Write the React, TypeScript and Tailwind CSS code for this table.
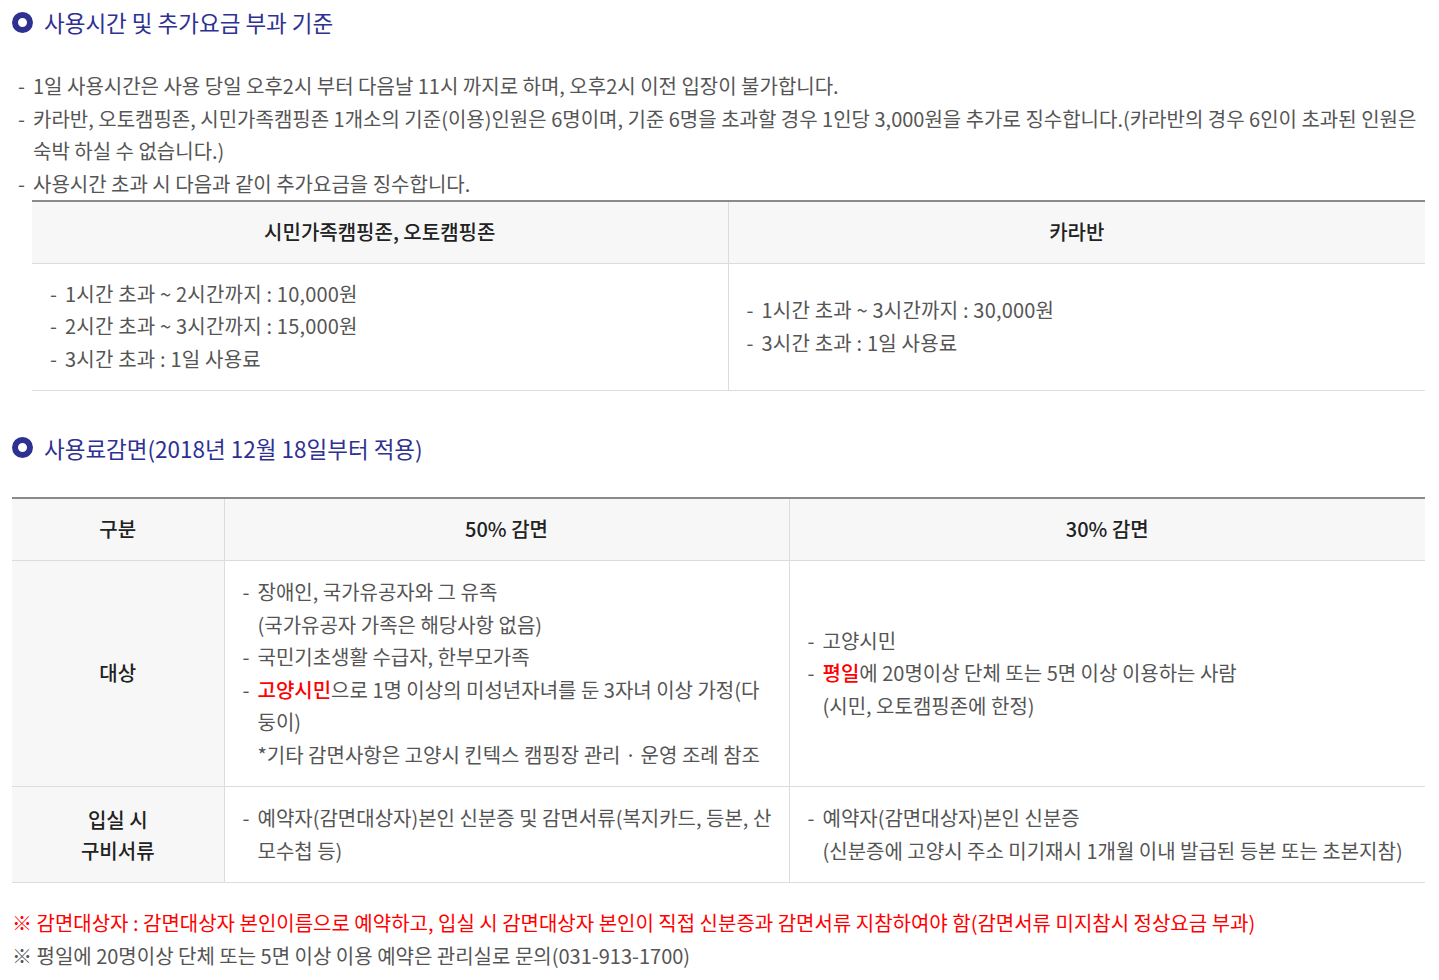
import React from 'react';

const Title: React.FC<{ children: React.ReactNode }> = ({ children }) => (
  <h3 className="flex items-center gap-[11px] text-[22.5px] leading-[30px] text-[#2e3192] font-normal">
    <span className="w-[21px] h-[21px] rounded-full border-[6.5px] border-[#2e3192] shrink-0" />
    <span>{children}</span>
  </h3>
);

const Dash: React.FC<{ children: React.ReactNode; className?: string }> = ({ children, className }) => (
  <li className={`flex ${className ?? ''}`}>
    <span className="w-[15px] shrink-0">-</span>
    <span>{children}</span>
  </li>
);

export default function App() {
  return (
    <div
      className="w-[1439px] h-[980px] bg-white text-[#555] text-[20px] leading-[32.5px] overflow-hidden"
      style={{ fontFamily: '"Noto Sans CJK KR", "Noto Sans", sans-serif' }}
    >
      <div className="pl-[12px] pr-[14px] pt-[7px]">
        <Title>사용시간 및 추가요금 부과 기준</Title>

        <ul className="mt-[33px] pl-[6px]">
          <Dash>1일 사용시간은 사용 당일 오후2시 부터 다음날 11시 까지로 하며, 오후2시 이전 입장이 불가합니다.</Dash>
          <Dash>
            카라반, 오토캠핑존, 시민가족캠핑존 1개소의 기준(이용)인원은 6명이며, 기준 6명을 초과할 경우 1인당 3,000원을 추가로 징수합니다.(카라반의 경우 6인이 초과된 인원은 숙박 하실 수 없습니다.)
          </Dash>
          <Dash>사용시간 초과 시 다음과 같이 추가요금을 징수합니다.</Dash>
        </ul>

        <table className="ml-[20px] w-[1393px] border-collapse border-t-2 border-t-[#8a8a8a] border-b border-b-[#dcdcdc]">
          <thead>
            <tr className="bg-[#f7f7f7] h-[62px] text-[#222]">
              <th className="w-[696px] font-medium border-r border-[#dcdcdc] border-b">시민가족캠핑존, 오토캠핑존</th>
              <th className="font-medium border-b border-[#dcdcdc]">카라반</th>
            </tr>
          </thead>
          <tbody className="tracking-[0.2px]">
            <tr className="h-[127px]">
              <td className="border-r border-[#dcdcdc] px-[18px] align-middle">
                <ul>
                  <Dash>1시간 초과 ~ 2시간까지 : 10,000원</Dash>
                  <Dash>2시간 초과 ~ 3시간까지 : 15,000원</Dash>
                  <Dash>3시간 초과 : 1일 사용료</Dash>
                </ul>
              </td>
              <td className="px-[18px] align-middle">
                <ul>
                  <Dash>1시간 초과 ~ 3시간까지 : 30,000원</Dash>
                  <Dash>3시간 초과 : 1일 사용료</Dash>
                </ul>
              </td>
            </tr>
          </tbody>
        </table>

        <div className="mt-[42px]">
          <Title>사용료감면(2018년 12월 18일부터 적용)</Title>
        </div>

        <table className="w-[1413px] mt-[34px] border-collapse border-t-2 border-t-[#8a8a8a] border-b border-b-[#dcdcdc]">
          <thead>
            <tr className="bg-[#f7f7f7] h-[63px] text-[#222]">
              <th className="w-[212px] font-medium border-r border-b border-[#dcdcdc]">구분</th>
              <th className="w-[565px] font-medium border-r border-b border-[#dcdcdc]">50% 감면</th>
              <th className="font-medium border-b border-[#dcdcdc]">30% 감면</th>
            </tr>
          </thead>
          <tbody>
            <tr className="h-[226px] border-b border-[#dcdcdc]">
              <th className="bg-[#f7f7f7] font-medium text-[#222] border-r border-[#dcdcdc]">대상</th>
              <td className="border-r border-[#dcdcdc] pl-[18px] pr-[14px] align-middle break-all">
                <ul>
                  <Dash>
                    장애인, 국가유공자와 그 유족
                    <br />
                    (국가유공자 가족은 해당사항 없음)
                  </Dash>
                  <Dash>국민기초생활 수급자, 한부모가족</Dash>
                  <Dash>
                    <span className="text-[#ff0000] font-medium">고양시민</span>으로 1명 이상의 미성년자녀를 둔 3자녀 이상 가정(다
                    <br />
                    둥이)
                    <br />
                    *기타 감면사항은 고양시 킨텍스 캠핑장 관리 · 운영 조례 참조
                  </Dash>
                </ul>
              </td>
              <td className="pl-[18px] pr-[20px] align-middle">
                <ul>
                  <Dash>고양시민</Dash>
                  <Dash>
                    <span className="text-[#ff0000] font-medium">평일</span>에 20명이상 단체 또는 5면 이상 이용하는 사람
                    <br />
                    (시민, 오토캠핑존에 한정)
                  </Dash>
                </ul>
              </td>
            </tr>
            <tr className="h-[96px]">
              <th className="bg-[#f7f7f7] font-medium text-[#222] border-r border-[#dcdcdc] leading-[31px]">
                입실 시
                <br />
                구비서류
              </th>
              <td className="border-r border-[#dcdcdc] pl-[18px] pr-[14px] align-middle break-all">
                <ul>
                  <Dash>
                    예약자(감면대상자)본인 신분증 및 감면서류(복지카드, 등본, 산
                    <br />
                    모수첩 등)
                  </Dash>
                </ul>
              </td>
              <td className="pl-[18px] pr-[20px] align-middle">
                <ul>
                  <Dash>
                    예약자(감면대상자)본인 신분증
                    <br />
                    (신분증에 고양시 주소 미기재시 1개월 이내 발급된 등본 또는 초본지참)
                  </Dash>
                </ul>
              </td>
            </tr>
          </tbody>
        </table>

        <div className="mt-[24px]">
          <p className="text-[#ff0000]">
            ※ 감면대상자 : 감면대상자 본인이름으로 예약하고, 입실 시 감면대상자 본인이 직접 신분증과 감면서류 지참하여야 함(감면서류 미지참시 정상요금 부과)
          </p>
          <p>※ 평일에 20명이상 단체 또는 5면 이상 이용 예약은 관리실로 문의(031-913-1700)</p>
        </div>
      </div>
    </div>
  );
}
